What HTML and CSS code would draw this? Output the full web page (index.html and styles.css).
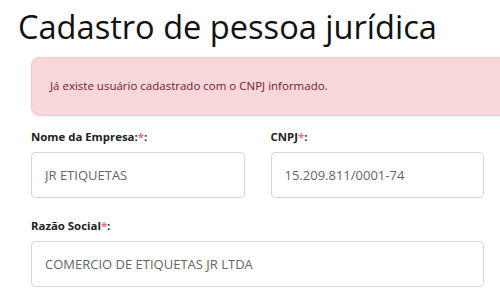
FILE: index.html
```html
<!DOCTYPE html>
<html>
<head>
    <meta charset="utf-8" />
    <title>Cadastro de pessoa jurídica</title>
    <link rel="stylesheet" href="styles.css">
</head>
<body>
    <div class="page">
        <h1 class="page-title">Cadastro de pessoa jurídica</h1>
        <div class="content">
            <div class="alert">Já existe usuário cadastrado com o CNPJ informado.</div>
            <form class="form">
                <div class="row">
                    <div class="field">
                        <label>Nome da Empresa:<span class="req">*</span>:</label>
                        <input type="text" value="JR ETIQUETAS">
                    </div>
                    <div class="field">
                        <label>CNPJ<span class="req">*</span>:</label>
                        <input type="text" value="15.209.811/0001-74">
                    </div>
                </div>
                <div class="row">
                    <div class="field">
                        <label>Razão Social<span class="req">*</span>:</label>
                        <input type="text" value="COMERCIO DE ETIQUETAS JR LTDA">
                    </div>
                </div>
            </form>
        </div>
    </div>
</body>
</html>
```
FILE: styles.css
```css
html, body {
    margin: 0;
    padding: 0;
    background: #fff;
    overflow: hidden;
}

body {
    font-family: "Open Sans", "Liberation Sans", sans-serif;
    color: #212529;
}

.page {
    width: 500px;
    overflow: hidden;
}

.page-title {
    margin: 5px 18px 0;
    font-size: 32.6px;
    font-weight: 400;
    line-height: 44px;
    color: #111;
}

.content {
    padding: 0 16px 0 31px;
}

.alert {
    margin: 8px -40px 0 0;
    padding: 19px 18px 20px;
    font-size: 11.5px;
    line-height: 18px;
    color: #721c24;
    background: #f8d7da;
    border: 1px solid #f5c6cb;
    border-radius: 8px;
}

.form {
    margin-top: 12px;
}

.row {
    display: flex;
    gap: 26px;
    margin-bottom: 19px;
}

.field {
    flex: 1;
    display: flex;
    flex-direction: column;
}

.field label {
    font-size: 11.4px;
    font-weight: 700;
    line-height: 18px;
    color: #222;
    margin-bottom: 6px;
}

.field .req {
    color: #e8707c;
}

.field input {
    height: 46px;
    box-sizing: border-box;
    padding: 0 13px;
    font-family: inherit;
    font-size: 13px;
    color: #666;
    border: 1px solid #d6d9dc;
    border-radius: 4px;
    background: #fff;
    outline: none;
}
```
